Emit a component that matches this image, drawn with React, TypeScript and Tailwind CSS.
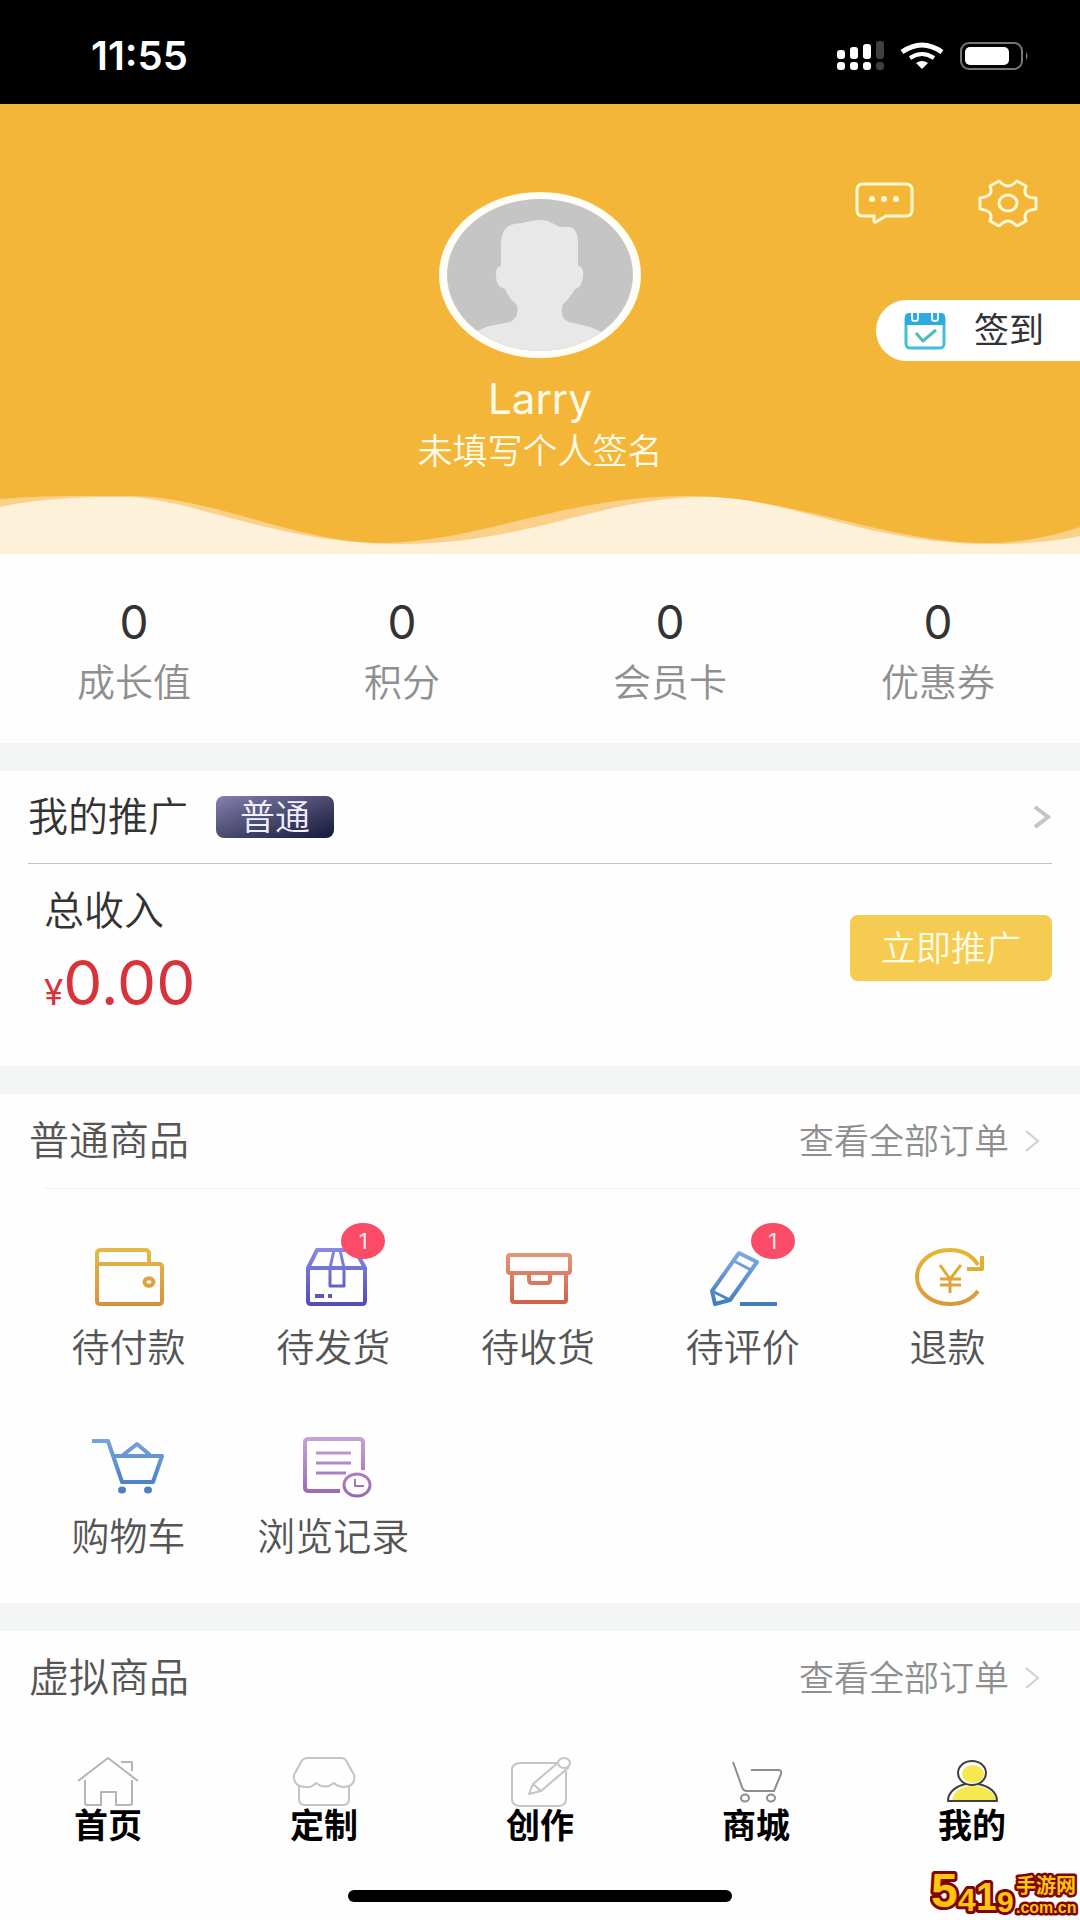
import type { ReactNode } from "react";

type Entry = {
  label: string;
  icon: ReactNode;
  badge?: number;
};

const stats = [
  { label: "成长值", value: 0 },
  { label: "积分", value: 0 },
  { label: "会员卡", value: 0 },
  { label: "优惠券", value: 0 }
];

type GradientProps = { id: string; from: string; to: string };

function Gradient({ id, from, to }: GradientProps) {
  return (
    <linearGradient id={id} gradientUnits="userSpaceOnUse" x1="0" y1="0" x2="0" y2="60">
      <stop offset="0" stopColor={from} />
      <stop offset="1" stopColor={to} />
    </linearGradient>
  );
}

type OrderIconProps = GradientProps & { children: ReactNode };

function OrderIcon({ id, from, to, children }: OrderIconProps) {
  return (
    <svg
      aria-hidden
      viewBox="0 0 72 60"
      className="h-[60px] w-[72px] overflow-visible"
      fill="none"
      stroke={`url(#${id})`}
      strokeWidth="4"
      strokeLinejoin="round"
    >
      <defs>
        <Gradient id={id} from={from} to={to} />
      </defs>
      {children}
    </svg>
  );
}

const orderEntries: Entry[] = [
  {
    label: "待付款",
    icon: (
      <OrderIcon id="wallet" from="#e6bb48" to="#d4923a">
        <path d="M5 17V6.500q0-3.500 4-3.500H53q4 0 4 3.500V17" />
        <path d="M5 17H67q3 0 3 3V54q0 3-3 3H8q-3 0-3-3Z" />
        <ellipse cx="57" cy="35" rx="4.500" ry="3.700" />
      </OrderIcon>
    )
  },
  {
    label: "待发货",
    badge: 1,
    icon: (
      <OrderIcon id="package" from="#8b8be6" to="#4d4bb6">
        <path d="M11 21 20 3H58L68 21V54q0 3-3 3H14q-3 0-3-3ZM11 21H68" />
        <path d="M37 3 33 21V39H47V21L43 3" strokeWidth="3" />
        <path d="M18 49h9M31 49h4" />
      </OrderIcon>
    )
  },
  {
    label: "待收货",
    icon: (
      <OrderIcon id="archive" from="#ea9b80" to="#cf5d46">
        <path d="M8 8H66q2 0 2 2V24q0 2-2 2H8q-2 0-2-2V10q0-2 2-2Z" />
        <path d="M10 26V53q0 2 2 2H62q2 0 2-2V26" />
        <path d="M27 26v7q0 3 3 3H45q3 0 3-3V26" />
      </OrderIcon>
    )
  },
  {
    label: "待评价",
    badge: 1,
    icon: (
      <OrderIcon id="review" from="#86aee4" to="#3f7cba">
        <path d="M32 6 50 15 23 53 8 57 5 44Z" />
        <path d="M27 14 44 23M5 44 23 53" strokeWidth="3" />
        <path d="M33 57H70" />
      </OrderIcon>
    )
  },
  {
    label: "退款",
    icon: (
      <OrderIcon id="refund" from="#e5b832" to="#d7973b">
        <path d="M66 18C60 8 50 3 38 3C19 3 5 15 5 30C5 45 19 57 38 57C50 57 60 52 66 44" />
        <path d="M55 22H70V9" />
        <path d="M28 18 38 32 49 18M38 31V46M28 32H49M28 38H49" strokeWidth="3" />
      </OrderIcon>
    )
  },
  {
    label: "购物车",
    icon: (
      <OrderIcon id="basket" from="#7ba5dc" to="#4179c0">
        <path d="M0 5H16L30 46H61L70 20H21" />
        <path d="M31 19 45 8 58 19" />
        <ellipse cx="30" cy="54" rx="4" ry="3.500" fill="#4c80c0" stroke="none" />
        <ellipse cx="56" cy="54" rx="4" ry="3.500" fill="#4c80c0" stroke="none" />
      </OrderIcon>
    )
  },
  {
    label: "浏览记录",
    icon: (
      <OrderIcon id="history" from="#c6a5da" to="#9a68b2">
        <path d="M66 34V6q0-3-4-3H12q-4 0-4 3V52q0 3 4 3H43" />
        <path d="M19 17H54M19 27H54M19 37H49" strokeWidth="3" />
        <ellipse cx="60" cy="49" rx="13" ry="11" strokeWidth="3" />
        <path d="M58 43V50H67" strokeWidth="2" />
      </OrderIcon>
    )
  }
];

const tabs = [
  {
    label: "首页",
    icon: (
      <g stroke="#b5b5b5" strokeWidth="2">
        <path d="M1 26 31 3 61 26" />
        <path d="M8 25V48q0 2 2 2H24V37H39V50H53q2 0 2-2V25M44 7H55V16" />
      </g>
    )
  },
  {
    label: "定制",
    icon: (
      <g stroke="#c4c4c4" strokeWidth="2">
        <path d="M15 3H48q4 0 6 4L61 20C63 28 57 32 51 32Q45 32 41 28Q32 35 23 28Q18 33 13 32C5 32 0 28 1 20L8 7Q10 3 15 3Z" />
        <path d="M6 31V44q0 6 6 6H50q6 0 6-6V31" />
      </g>
    )
  },
  {
    label: "创作",
    icon: (
      <g stroke="#c4c4c4" strokeWidth="2">
        <path d="M48 8H12Q3 8 3 15V44q0 7 9 7H48q9 0 9-7V16" />
        <path d="M24 29 51 6 59 13 32 36 20 39ZM24 29 32 36" />
        <ellipse cx="55" cy="8" rx="6" ry="5" fill="#fefefe" />
      </g>
    )
  },
  {
    label: "商城",
    icon: (
      <g stroke="#8d8d8d" strokeWidth="2">
        <path d="M8 7 17 32Q18 36 22 36H49L56 19Q57 15 53 15H26" />
        <ellipse cx="20" cy="43" rx="4" ry="3.500" />
        <ellipse cx="46" cy="43" rx="4" ry="3.500" />
      </g>
    )
  },
  {
    label: "我的",
    icon: (
      <g>
        <ellipse cx="32" cy="19" rx="11" ry="9" fill="#f6e84f" />
        <path d="M11 46C12 35 22 31 32 31C44 31 54 37 55 46Z" fill="#f6e84f" />
        <g stroke="#3f3f3f" strokeWidth="2">
          <ellipse cx="31" cy="18" rx="14" ry="12" />
          <path d="M25 29C14 31 7 38 7 46H56C56 38 49 31 37 29" />
        </g>
      </g>
    )
  }
];

function StatusBar() {
  return (
    <div className="flex h-[104px] items-center justify-between bg-black pr-[50px] pl-[91px] text-white">
      <span className="pt-2 text-[40px] leading-none font-semibold">11:55</span>
      <div className="flex items-center gap-4 pt-2">
        <svg aria-hidden viewBox="0 0 48 30" className="h-[30px] w-12" fill="white">
          <rect x="1" y="9" width="8" height="9" rx="3" />
          <rect x="14" y="6" width="8" height="12" rx="3" />
          <rect x="27" y="3" width="8" height="15" rx="3" />
          <rect x="40" y="0" width="8" height="18" rx="3" opacity=".25" />
          <rect x="1" y="21" width="8" height="8" rx="3" />
          <rect x="14" y="21" width="8" height="8" rx="3" />
          <rect x="27" y="21" width="8" height="8" rx="3" />
          <rect x="40" y="21" width="8" height="8" rx="3" opacity=".25" />
        </svg>
        <svg aria-hidden viewBox="0 0 44 28" className="h-7 w-11" fill="none" stroke="white" strokeWidth="5">
          <path d="M2 10Q22-4 42 10" />
          <path d="M10 16Q22 8 34 16" strokeWidth="4" />
          <path d="M16 21Q22 17 28 21L22 27Z" fill="white" stroke="none" />
        </svg>
        <svg aria-hidden viewBox="0 0 70 28" className="h-7 w-[70px]" fill="none">
          <rect x="1" y="1" width="61" height="26" rx="8" stroke="#777" strokeWidth="2" />
          <rect x="5" y="5" width="44" height="18" rx="5" fill="white" />
          <path d="M66 10Q69 14 66 18Z" fill="#888" />
        </svg>
      </div>
    </div>
  );
}

function Avatar() {
  return (
    <svg role="img" aria-label="Larry" viewBox="0 0 202 166" className="h-[166px] w-[202px]">
      <defs>
        <clipPath id="avatar-clip">
          <ellipse cx="101" cy="83" rx="93" ry="76" />
        </clipPath>
      </defs>
      <ellipse cx="101" cy="83" rx="101" ry="83" fill="#fefdf6" />
      <ellipse cx="101" cy="83" rx="93" ry="76" fill="#c5c5c5" />
      <path
        clipPath="url(#avatar-clip)"
        fill="#e8e8e8"
        d="M62 74V53Q62 33 76 32Q84 31 92 29Q106 26 113 31L121 35H131Q139 37 139 52V74Q145 75 144 84Q143 96 136 97Q131 106 124 112Q119 129 134 131Q152 134 162 140V170H35V141Q48 133 66 131Q81 129 78 113Q70 107 66 97Q57 95 57 84Q56 75 62 74Z"
      />
    </svg>
  );
}

function ProfileHeader() {
  return (
    <header className="bg-[#f4b638] text-[#fffbe8]">
      <div className="grid grid-cols-[1fr_auto_1fr] pt-[75px]">
        <div />
        <div className="flex flex-col items-center pt-[13px]">
          <Avatar />
          <h1 className="mt-[17px] text-[42px] leading-[48px]">Larry</h1>
          <p className="mt-1 text-[35px] leading-[48px] font-[350]">未填写个人签名</p>
        </div>
        <div className="flex flex-col items-end">
          <div className="flex gap-16 pr-[42px]">
            <button type="button" aria-label="消息">
              <svg aria-hidden viewBox="0 0 60 48" className="h-12 w-[60px]" fill="none" stroke="#fff8d4" strokeWidth="3">
                <path d="M9 5H52q6 0 6 6V31q0 6-6 6H32L22 43Q20 44 20 41V37H9q-6 0-6-6V11q0-6 6-6Z" />
                <g fill="#fff8d4" stroke="none">
                  <circle cx="18" cy="20" r="3" />
                  <circle cx="30" cy="20" r="3" />
                  <circle cx="42" cy="20" r="3" />
                </g>
              </svg>
            </button>
            <button type="button" aria-label="设置">
              <svg
                aria-hidden
                viewBox="0 0 60 48"
                className="h-12 w-[60px]"
                fill="none"
                stroke="#fff8d4"
                strokeWidth="3"
                strokeLinejoin="round"
              >
                <path d="M21 2Q26 7 30 7Q34 7 39 2L48 7Q46 13 48 16Q51 19 58 19V30Q50 31 48 34Q46 37 48 42L39 47Q34 42 30 42Q26 42 21 47L12 42Q14 37 12 34Q9 31 2 30V19Q9 18 12 15Q14 12 12 7Z" />
                <ellipse cx="30" cy="24" rx="9" ry="8" />
              </svg>
            </button>
          </div>
          <button
            type="button"
            className="mt-[73px] flex h-[61px] items-center gap-7 rounded-l-full bg-white pr-9 pl-7 text-[35px] text-[#333]"
          >
            <svg aria-hidden viewBox="0 0 42 38" className="h-[38px] w-[42px]" fill="none">
              <rect x="2" y="3" width="38" height="33" rx="4" stroke="#3fc0d8" strokeWidth="3" />
              <path d="M1 13V5Q1 1 5 1H37Q41 1 41 5V13Z" fill="#2eaae2" />
              <path d="M8 0V7Q8 9 11 9Q14 9 14 7V0M28 0V7Q28 9 31 9Q34 9 34 7V0" stroke="#e9f9ff" strokeWidth="2" />
              <path d="M12 21 19 29 32 18" stroke="#4dbdb9" strokeWidth="3" />
            </svg>
            签到
          </button>
        </div>
      </div>
      <svg aria-hidden viewBox="0 0 1080 60" preserveAspectRatio="none" className="mt-[19px] block h-[60px] w-full">
        <path
          fill="#fad08a"
          d="M0 5C40 1 100 2 130 2C210 2 300 49 379 49C480 49 560 2 690 2C790 2 890 49 985 49C1020 49 1050 43 1080 33V60H0Z"
        />
        <path
          fill="#fdf1da"
          d="M0 13C40 4 80 3 125 3C190 3 275 50 400 50C530 50 600 3 705 3C790 3 865 50 990 50C1030 50 1055 47 1080 42V60H0Z"
        />
      </svg>
    </header>
  );
}

function Stats() {
  return (
    <section className="grid grid-cols-4 pt-10 pr-2 pb-[37px] text-center">
      {stats.map((item) => (
        <a key={item.label} href="#" className="flex flex-col gap-2">
          <span className="text-[46px] leading-[56px] text-[#333]">{item.value}</span>
          <span className="text-[38px] leading-[48px] font-[350] text-[#8f8f8f]">{item.label}</span>
        </a>
      ))}
    </section>
  );
}

function Promotion() {
  return (
    <section className="px-7">
      <a href="#" className="flex h-[93px] items-center border-b border-[#c6c6c6] pr-px">
        <h2 className="text-[40px] leading-[48px] font-[350] text-[#333]">我的推广</h2>
        <span className="ml-7 flex h-[42px] items-center rounded-lg bg-linear-to-br from-[#8582ad] via-[#4c4b70] to-[#16193a] px-6 text-[35px] leading-none font-[350] text-[#eef0ff]">
          普通
        </span>
        <svg aria-hidden viewBox="0 0 18 24" className="ml-auto h-6 w-[18px]" fill="none" stroke="#c4c4c4" strokeWidth="4">
          <path d="M2 2 15 12 2 22" />
        </svg>
      </a>
      <div className="flex items-start justify-between pt-[23px] pb-[53px]">
        <div className="pl-4">
          <p className="text-[40px] leading-[48px] font-[350] text-[#333]">总收入</p>
          <p className="mt-[18px] flex h-[60px] items-baseline text-[#d8333a]">
            <span className="text-[35px] leading-none">¥</span>
            <span className="text-[62px] leading-[60px]">0.00</span>
          </p>
        </div>
        <button
          type="button"
          className="mt-7 h-[66px] rounded-lg bg-[#f6cb52] px-[31px] text-[35px] leading-none font-[350] text-[#fffce6]"
        >
          立即推广
        </button>
      </div>
    </section>
  );
}

function OrderHeading({ title }: { title: string }) {
  return (
    <div className="flex h-[94px] items-center justify-between pr-10 pl-[29px]">
      <h2 className="text-[40px] leading-[48px] font-[350] text-[#555]">{title}</h2>
      <a href="#" className="flex items-center gap-[15px] text-[35px] leading-[48px] font-[350] text-[#8f8f8f]">
        查看全部订单
        <svg aria-hidden viewBox="0 0 16 22" className="h-[22px] w-4" fill="none" stroke="#cfcfcf" strokeWidth="2">
          <path d="M2 1 14 11 2 21" />
        </svg>
      </a>
    </div>
  );
}

function OrderGrid() {
  return (
    <div className="grid grid-cols-5 gap-y-[65px] pt-[58px] pr-[30px] pb-[43px] pl-[26px]">
      {orderEntries.map((entry) => (
        <a key={entry.label} href="#" className="flex flex-col items-center gap-4">
          <span className="relative">
            {entry.icon}
            {entry.badge && (
              <span className="absolute -top-6 -right-4 flex h-9 w-11 items-center justify-center rounded-[50%] bg-[#fa4b67] text-[22px] leading-none text-[#ffe3e8]">
                {entry.badge}
              </span>
            )}
          </span>
          <span className="text-[38px] leading-[48px] font-[350] whitespace-nowrap text-[#555]">{entry.label}</span>
        </a>
      ))}
    </div>
  );
}

function TabBar() {
  return (
    <nav className="mt-auto pt-[30px] pb-[18px]">
      <div className="grid grid-cols-5">
        {tabs.map((tab) => (
          <a key={tab.label} href="#" className="flex flex-col items-center">
            <svg aria-hidden viewBox="0 0 62 52" className="h-[52px] w-[62px] overflow-visible" fill="none" strokeLinejoin="round">
              {tab.icon}
            </svg>
            <span className="text-[34px] leading-[38px] font-bold text-black">{tab.label}</span>
          </a>
        ))}
      </div>
      <div className="mx-auto mt-[45px] h-3 w-96 rounded-full bg-black" />
    </nav>
  );
}

function SiteMark() {
  return (
    <svg
      role="img"
      aria-label="5419手游网"
      viewBox="0 0 150 56"
      className="absolute right-0 bottom-0 h-14 w-[150px] font-['Liberation_Sans','Noto_Sans_CJK_SC',sans-serif] font-bold"
      fill="#ffc60a"
      stroke="#7d0508"
      strokeWidth="6"
      strokeLinejoin="round"
      paintOrder="stroke"
    >
      <text x="1" y="43" fontSize="48">5</text>
      <text x="28" y="47" fontSize="32">4</text>
      <text x="46" y="46" fontSize="38">1</text>
      <text x="67" y="48" fontSize="30">9</text>
      <g strokeWidth="5">
        <text x="86" y="29" fontSize="20">手游网</text>
        <text x="86" y="49" fontSize="16">.com.cn</text>
      </g>
    </svg>
  );
}

export default function App() {
  return (
    <div className="relative flex min-h-screen flex-col bg-[#fefefe] font-['Inter','Noto_Sans_CJK_SC',sans-serif]">
      <StatusBar />
      <ProfileHeader />
      <main>
        <Stats />
        <div className="h-7 bg-[#f4f5f5]" />
        <Promotion />
        <div className="h-7 bg-[#f4f5f5]" />
        <section>
          <OrderHeading title="普通商品" />
          <div className="ml-11 h-px bg-[#f0f0f0]" />
          <OrderGrid />
        </section>
        <div className="h-7 bg-[#f4f5f5]" />
        <section>
          <OrderHeading title="虚拟商品" />
        </section>
      </main>
      <TabBar />
      <SiteMark />
    </div>
  );
}
